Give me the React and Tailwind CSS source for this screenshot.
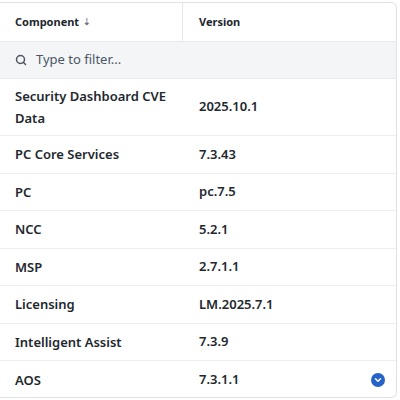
import { ChevronDown, Search } from "lucide-react";

const ROWS = [
  ["Security Dashboard CVE Data", "2025.10.1"],
  ["PC Core Services", "7.3.43"],
  ["PC", "pc.7.5"],
  ["NCC", "5.2.1"],
  ["MSP", "2.7.1.1"],
  ["Licensing", "LM.2025.7.1"],
  ["Intelligent Assist", "7.3.9"],
  ["AOS", "7.3.1.1"],
];

export default function App() {
  return (
    <div className="h-[400px] w-[400px] bg-white pt-[2px] font-['Lato',sans-serif] text-[#22272e]">
      <div className="h-[396px] w-[397px] overflow-hidden rounded-br-md rounded-tr-md border border-l-0 border-[#dfe3e8]">
        <div className="flex h-[38px] items-center text-[11px] font-bold">
          <div className="flex h-full w-[183px] items-center gap-1 border-r border-[#e6e9ed] pl-[15px]">
            Component <span className="text-[9px] text-[#6b7380]">⇣</span>
          </div>
          <div className="pl-[16px]">Version</div>
        </div>
        <div className="flex h-[38px] items-center gap-[9px] border-y border-[#e6e9ed] bg-[#f3f5f7] pl-[15px] text-[13px] text-[#4b5563]">
          <Search size={12} strokeWidth={3} className="text-[#4b5563]" />
          Type to filter...
        </div>
        {ROWS.map(([name, ver], i) => (
          <div
            key={name}
            className={`flex items-center border-b border-[#eceef1] text-[13px] font-semibold ${i === 0 ? "h-[57px]" : "h-[37.5px]"} ${i === ROWS.length - 1 ? "border-b-0" : ""}`}
          >
            <div className="w-[183px] pl-[15px] pr-3 leading-[22px]">{name}</div>
            <div className="flex-1 pl-[16px]">{ver}</div>
            {i === ROWS.length - 1 && (
              <div className="mr-[11px] flex h-[14px] w-[14px] items-center justify-center rounded-full bg-[#2563c9]">
                <ChevronDown size={10} strokeWidth={3.5} className="text-white" />
              </div>
            )}
          </div>
        ))}
      </div>
    </div>
  );
}
